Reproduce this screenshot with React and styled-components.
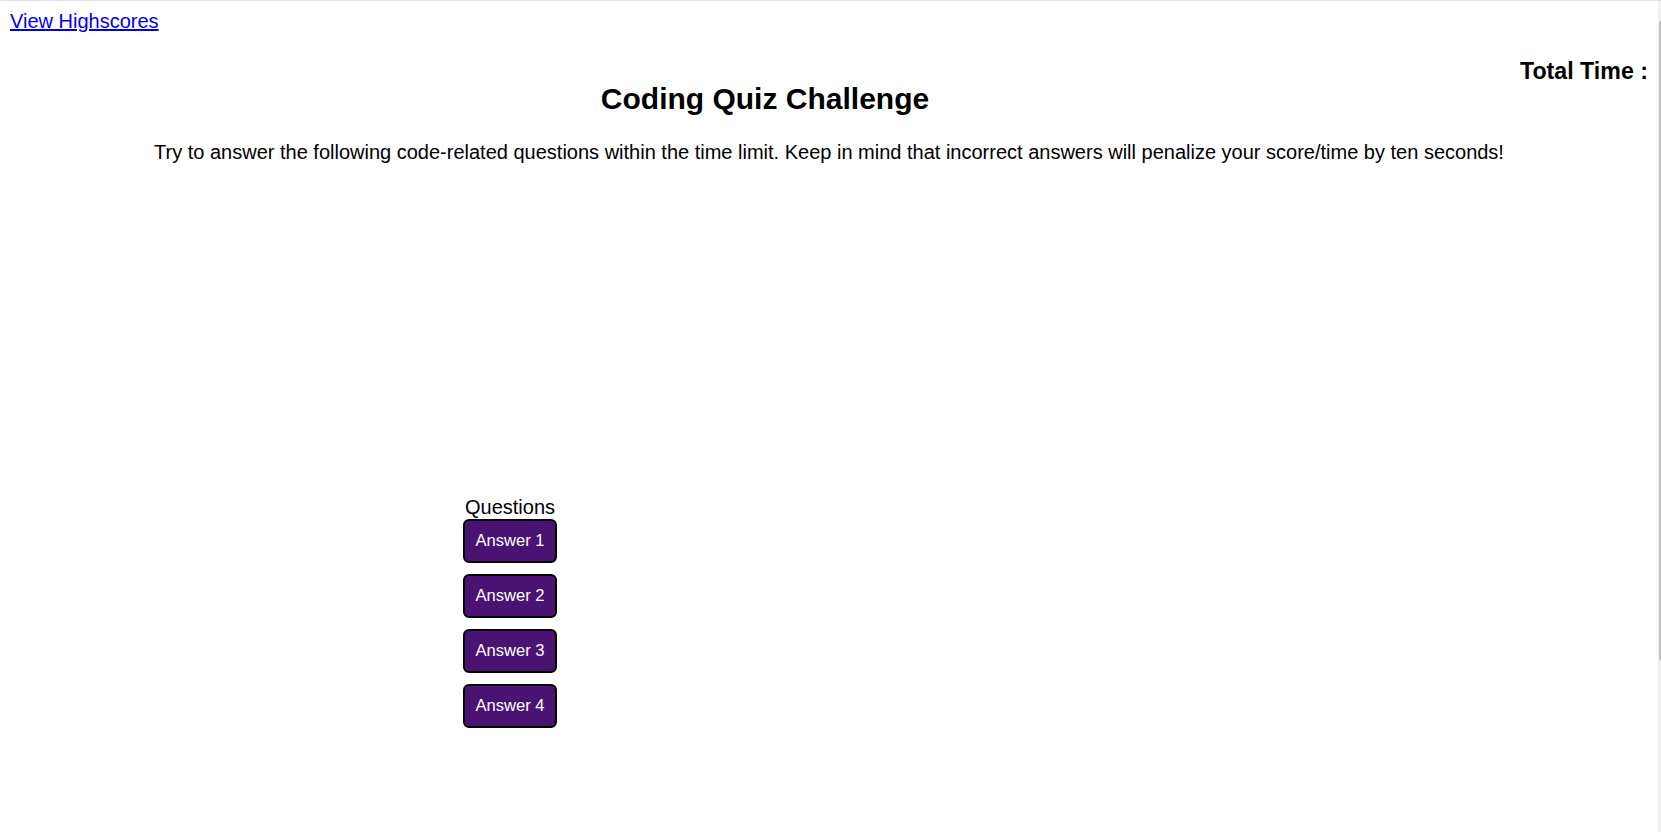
import styled, { createGlobalStyle } from "styled-components";

const GlobalStyle = createGlobalStyle`
  html, body {
    margin: 0;
    padding: 0;
    background: #fff;
  }
  body {
    font-family: "Liberation Sans", Arial, sans-serif;
    font-size: 20px;
    color: #000;
  }
`;

const Page = styled.div`
  border-top: 1px solid #dedede;
  padding: 9px 13px 10px 10px;
`;

const TopLink = styled.a`
  display: inline-block;
  color: #0000ee;
  text-decoration: underline;
  line-height: 23px;
  cursor: pointer;
`;

const Header = styled.header`
  display: flex;
  align-items: flex-start;
`;

const Title = styled.h2`
  flex: 1;
  margin: 49px 0 0;
  text-align: center;
  font-size: 30px;
  font-weight: bold;
  line-height: 34px;
`;

const Timer = styled.h3`
  margin: 25px 0 0;
  font-size: 23.2px;
  font-weight: bold;
  line-height: 26px;
`;

const Intro = styled.p`
  margin: 25px 0 0;
  text-align: center;
  line-height: 23px;
`;

const QuizArea = styled.section`
  width: 1000px;
  margin-top: 332px;
  display: flex;
  flex-direction: column;
  align-items: center;
`;

const Question = styled.div`
  line-height: 23px;
`;

const Answers = styled.div`
  display: flex;
  flex-direction: column;
  gap: 11px;
`;

const AnswerButton = styled.button`
  font-family: "Liberation Sans", Arial, sans-serif;
  font-size: 16.6px;
  line-height: 20px;
  color: #fff;
  background: #4a1273;
  border: 2px solid #000;
  border-radius: 6px;
  padding: 10px 10px;
  cursor: pointer;
`;

const ScrollTrack = styled.div`
  position: fixed;
  top: 1px;
  right: 0;
  bottom: 0;
  width: 3px;
  background: #f1f1f1;
`;

const ScrollThumb = styled.div`
  margin: 20px 0 0 1px;
  height: 639px;
  background: #c1c1c1;
`;

const answers = ["Answer 1", "Answer 2", "Answer 3", "Answer 4"];

export default function App() {
  return (
    <>
      <GlobalStyle />
      <Page>
        <TopLink href="#">View Highscores</TopLink>
        <Header>
          <Title>Coding Quiz Challenge</Title>
          <Timer>Total Time :</Timer>
        </Header>
        <Intro>
          Try to answer the following code-related questions within the time
          limit. Keep in mind that incorrect answers will penalize your
          score/time by ten seconds!
        </Intro>
        <QuizArea>
          <Question>Questions</Question>
          <Answers>
            {answers.map((a) => (
              <AnswerButton key={a}>{a}</AnswerButton>
            ))}
          </Answers>
        </QuizArea>
      </Page>
      <ScrollTrack>
        <ScrollThumb />
      </ScrollTrack>
    </>
  );
}
